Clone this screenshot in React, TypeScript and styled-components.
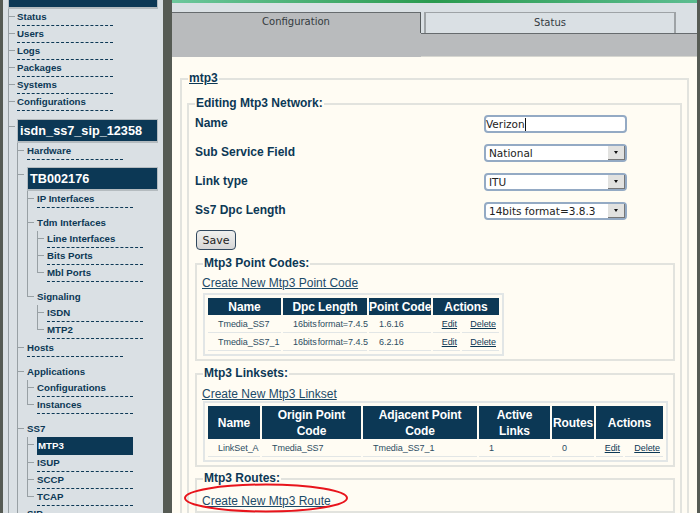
import React from "react";
import styled, { createGlobalStyle } from "styled-components";

const Global = createGlobalStyle`
  html, body { margin: 0; padding: 0; height: 513px; overflow: hidden; background: #565b54; }
  * { box-sizing: border-box; }
`;

const NAVY = "#0c3855";

const Shell = styled.div`
  display: flex;
  height: 513px;
  padding: 0 3px;
  overflow: hidden;
  font-family: "Liberation Sans", Arial, sans-serif;
  color: ${NAVY};
  position: relative;
`;

const Sidebar = styled.nav`
  flex: 0 0 160px;
  height: 513px;
  overflow: hidden;
  background: #dae0e4;
  padding: 0 5px 0 5px;
`;

const TopBlock = styled.div`
  height: 9px;
  background: ${NAVY};
  border-bottom: 2px solid #b4bbbf;
  border-left: 1px solid #b4bbbf;
  border-right: 1px solid #b4bbbf;
`;

const TreeNode = styled.div<{ $gap?: number; $last?: boolean; $indent?: number }>`
  position: relative;
  padding-top: ${(p) => p.$gap ?? 0}px;
  padding-left: ${(p) => p.$indent ?? 10}px;
  &::before {
    content: "";
    position: absolute;
    left: 0;
    top: 0;
    width: 1px;
    background: #98a0a4;
    ${(p) => (p.$last ? `height: ${(p.$gap ?? 0) + 8}px;` : "bottom: 0;")}
  }
  &::after {
    content: "";
    position: absolute;
    left: 0;
    top: ${(p) => (p.$gap ?? 0) + 7}px;
    width: 7px;
    height: 1px;
    background: #98a0a4;
  }
`;

const LinkRow = styled.div`
  width: 96px;
  height: 17px;
  font-size: 9.7px;
  font-weight: 700;
  line-height: 15px;
  border-bottom: 1px dashed ${NAVY};
  white-space: nowrap;
`;

const GroupRow = styled.div`
  height: 16px;
  font-size: 9.7px;
  font-weight: 700;
  line-height: 16px;
  white-space: nowrap;
`;

const BlockRow = styled.div<{ $h: number }>`
  height: ${(p) => p.$h}px;
  background: ${NAVY};
  color: #fff;
  border: 1px solid #b4bbbf;
  border-width: 1px 1px 2px 1px;
  font-size: 12.7px;
  font-weight: 700;
  line-height: ${(p) => p.$h - 2}px;
  padding-left: 2px;
  white-space: nowrap;
`;

const ActiveRow = styled.div`
  width: 96px;
  height: 18px;
  background: ${NAVY};
  color: #fff;
  font-size: 9.7px;
  font-weight: 700;
  line-height: 18px;
  padding-left: 1px;
`;

const Gutter = styled.div`
  flex: 0 0 9px;
`;

const Main = styled.main`
  flex: 1;
  min-width: 0;
  height: 513px;
  overflow: hidden;
  background: #fffcf3;
`;

const GreenBar = styled.div`
  height: 3px;
  background: linear-gradient(90deg, #6cc79c, #2a9a4e 50%, #5cbd90);
`;

const TabStrip = styled.div`
  display: flex;
  align-items: flex-end;
  height: 30px;
  padding-top: 9px;
  background: #dae0e4;
`;

const Tab = styled.div<{ $active?: boolean }>`
  font-family: "DejaVu Sans", sans-serif;
  font-size: 10px;
  text-align: center;
  height: 21px;
  color: #333a3e;
  ${(p) =>
    p.$active
      ? `flex: 0 0 249px; background:#b9bbbd; border-top:1px solid #666b6e; border-right:1px solid #555a5c; line-height:17px;`
      : `flex: 0 0 252px; margin-left:3px; background:#dae0e4; border:1px solid #9ea3a6; border-bottom:0; border-width:1px 2px 0 2px; line-height:19px;`}
`;

const GreyBand = styled.div`
  height: 24px;
  background: #b9bbbd;
  border-top: 1px solid #666b6e;
  border-bottom: 1px solid #d6d6d0;
  margin-left: 249px;
`;

const GreyFill = styled.div`
  background: #b9bbbd;
`;

const Content = styled.div`
  padding: 15px 8px 0;
`;

const Box = styled.fieldset<{ $pad: string; $mt?: number }>`
  margin: ${(p) => p.$mt ?? 0}px 0 0;
  padding: ${(p) => p.$pad};
  border: 2px solid #e2e3de;
  min-width: 0;
`;

const Legend = styled.legend<{ $link?: boolean }>`
  font-size: 12px;
  font-weight: 700;
  line-height: 13px;
  padding: 0 1px;
  margin-left: 1px;
  text-decoration: ${(p) => (p.$link ? "underline" : "none")};
  color: ${NAVY};
`;

const Stack = styled.div`
  padding-left: 1px;
`;

const FormGrid = styled.div`
  display: grid;
  grid-template-columns: 289px 143px;
  grid-auto-rows: 18px;
  row-gap: 11px;
  padding-top: 5px;
`;

const FieldLabel = styled.label`
  font-size: 12px;
  font-weight: 700;
  line-height: 16px;
`;

const Control = styled.div`
  position: relative;
  display: flex;
  align-items: center;
  height: 18px;
  border: 2px solid #94aac4;
  border-radius: 4px;
  background: #fff;
  font-family: "DejaVu Sans", sans-serif;
  font-size: 10.5px;
  color: #222;
`;

const TextValue = styled.span`
  border-right: 1px solid #111;
  line-height: 13px;
`;

const SelectValue = styled.span`
  flex: 1;
  padding-left: 3px;
  white-space: nowrap;
`;

const SelectButton = styled.span`
  width: 17px;
  height: 14px;
  background: #e2e2e0;
  border-right: 1px solid #777;
  border-bottom: 1px solid #777;
  display: flex;
  align-items: center;
  justify-content: center;
  &::after {
    content: "";
    border-left: 2px solid transparent;
    border-right: 2px solid transparent;
    border-top: 3px solid #111;
  }
`;

const SaveButton = styled.button`
  display: block;
  width: 40px;
  height: 20px;
  margin: 10px 0 0 1px;
  padding: 0;
  border: 1px solid #31485e;
  border-radius: 4px;
  background: linear-gradient(#f0f0ee, #d6d6d6);
  font-family: "DejaVu Sans", sans-serif;
  font-size: 11px;
  color: #222;
`;

const CreateLink = styled.a`
  display: block;
  font-size: 12px;
  line-height: 14px;
  color: #1c4a68;
  text-decoration: underline;
  white-space: nowrap;
`;

const DataTable = styled.table<{ $w: number; $mt: number }>`
  table-layout: fixed;
  width: ${(p) => p.$w}px;
  margin: ${(p) => p.$mt}px 0 0 1px;
  padding: 1px;
  border: 2px solid #e2e6e6;
  border-collapse: separate;
  border-spacing: 2px;
`;

const HeadCell = styled.th<{ $h: number }>`
  height: ${(p) => p.$h}px;
  padding: 0;
  background: ${NAVY};
  color: #fff;
  font-size: 12px;
  font-weight: 700;
  line-height: 16px;
  text-align: center;
  white-space: nowrap;
  letter-spacing: -0.1px;
`;

const Cell = styled.td`
  height: 16px;
  padding: 0 0 2px 10px;
  border-bottom: 1px solid #e2e6e6;
  font-size: 9px;
  line-height: 12px;
  color: #2d4c62;
  white-space: nowrap;
  word-spacing: -1.5px;
  letter-spacing: -0.05px;
`;

const ActionCell = styled(Cell)`
  padding: 0 3px 2px 0;
  text-align: right;
`;

const ActionLink = styled.a`
  color: ${NAVY};
  text-decoration: underline;
`;

const Ring = styled.svg`
  position: absolute;
  left: 183px;
  top: 483px;
  pointer-events: none;
`;

type N = { label: string; kind?: "group" | "block" | "active"; h?: number; gap?: number; kids?: N[] };

const tree: N[] = [
  { label: "Status" },
  { label: "Users" },
  { label: "Logs" },
  { label: "Packages" },
  { label: "Systems" },
  { label: "Configurations" },
  {
    label: "isdn_ss7_sip_12358",
    kind: "block",
    h: 24,
    gap: 8,
    kids: [
      { label: "Hardware" },
      {
        label: "TB002176",
        kind: "block",
        h: 24,
        gap: 7,
        kids: [
          { label: "IP Interfaces", gap: 0 },
          {
            label: "Tdm Interfaces",
            kind: "group",
            gap: 7,
            kids: [{ label: "Line Interfaces" }, { label: "Bits Ports" }, { label: "Mbl Ports" }],
          },
          {
            label: "Signaling",
            kind: "group",
            gap: 7,
            kids: [{ label: "ISDN" }, { label: "MTP2" }],
          },
        ],
      },
      { label: "Hosts", gap: 1 },
      {
        label: "Applications",
        kind: "group",
        gap: 7,
        kids: [{ label: "Configurations" }, { label: "Instances" }],
      },
      {
        label: "SS7",
        kind: "group",
        gap: 7,
        kids: [
          { label: "MTP3", kind: "active" },
          { label: "ISUP" },
          { label: "SCCP" },
          { label: "TCAP" },
        ],
      },
      { label: "SIP", kind: "group", gap: 0 },
    ],
  },
];

function TreeView({ nodes, depth }: { nodes: N[]; depth: number }) {
  return (
    <>
      {nodes.map((n, i) => (
        <TreeNode
          key={n.label + i}
          $gap={n.gap}
          $indent={depth === 0 ? 9 : 10}
          $last={depth > 1 && i === nodes.length - 1}
        >
          {n.kind === "block" ? (
            <BlockRow $h={n.h ?? 24}>{n.label}</BlockRow>
          ) : n.kind === "active" ? (
            <ActiveRow>{n.label}</ActiveRow>
          ) : n.kind === "group" ? (
            <GroupRow>{n.label}</GroupRow>
          ) : (
            <LinkRow>{n.label}</LinkRow>
          )}
          {n.kids && <TreeView nodes={n.kids} depth={depth + 1} />}
        </TreeNode>
      ))}
    </>
  );
}

function Field({ label, children }: { label: string; children: React.ReactNode }) {
  return (
    <>
      <FieldLabel>{label}</FieldLabel>
      {children}
    </>
  );
}

function SelectBox({ value }: { value: string }) {
  return (
    <Control>
      <SelectValue>{value}</SelectValue>
      <SelectButton />
    </Control>
  );
}

function Actions() {
  return (
    <>
      <ActionCell>
        <ActionLink>Edit</ActionLink>
      </ActionCell>
      <ActionCell>
        <ActionLink>Delete</ActionLink>
      </ActionCell>
    </>
  );
}

const pointRows = [
  ["Tmedia_SS7", "16bits format=7.4.5", "1.6.16"],
  ["Tmedia_SS7_1", "16bits format=7.4.5", "6.2.16"],
];

export default function App() {
  return (
    <>
      <Global />
      <Shell>
        <Sidebar>
          <TopBlock />
          <TreeView nodes={tree} depth={0} />
        </Sidebar>
        <Gutter />
        <Main>
          <GreenBar />
          <TabStrip>
            <Tab $active>Configuration</Tab>
            <Tab>Status</Tab>
          </TabStrip>
          <GreyFill>
            <GreyBand />
          </GreyFill>
          <Content>
            <Box $pad="0 5px 0 5px">
              <Legend $link>mtp3</Legend>
              <Box $pad="0 5px 0 5px" $mt={12}>
                <Legend>Editing Mtp3 Network:</Legend>
                <Stack>
                  <FormGrid>
                    <Field label="Name">
                      <Control>
                        <TextValue>Verizon</TextValue>
                      </Control>
                    </Field>
                    <Field label="Sub Service Field">
                      <SelectBox value="National" />
                    </Field>
                    <Field label="Link type">
                      <SelectBox value="ITU" />
                    </Field>
                    <Field label="Ss7 Dpc Length">
                      <SelectBox value="14bits format=3.8.3" />
                    </Field>
                  </FormGrid>
                  <SaveButton>Save</SaveButton>

                  <Box $pad="6px 4px 3px 5px" $mt={7}>
                    <Legend>Mtp3 Point Codes:</Legend>
                    <CreateLink>Create New Mtp3 Point Code</CreateLink>
                    <DataTable $w={300} $mt={3}>
                      <colgroup>
                        <col style={{ width: 73 }} />
                        <col style={{ width: 84 }} />
                        <col style={{ width: 62 }} />
                        <col style={{ width: 27 }} />
                        <col style={{ width: 37 }} />
                      </colgroup>
                      <thead>
                        <tr>
                          <HeadCell $h={17}>Name</HeadCell>
                          <HeadCell $h={17}>Dpc Length</HeadCell>
                          <HeadCell $h={17}>Point Code</HeadCell>
                          <HeadCell $h={17} colSpan={2}>Actions</HeadCell>
                        </tr>
                      </thead>
                      <tbody>
                        {pointRows.map((r) => (
                          <tr key={r[0]}>
                            {r.map((c) => (
                              <Cell key={c}>{c}</Cell>
                            ))}
                            <Actions />
                          </tr>
                        ))}
                      </tbody>
                    </DataTable>
                  </Box>

                  <Box $pad="7px 4px 3px 5px" $mt={6}>
                    <Legend>Mtp3 Linksets:</Legend>
                    <CreateLink>Create New Mtp3 Linkset</CreateLink>
                    <DataTable $w={463} $mt={0}>
                      <colgroup>
                        <col style={{ width: 52 }} />
                        <col style={{ width: 99 }} />
                        <col style={{ width: 114 }} />
                        <col style={{ width: 71 }} />
                        <col style={{ width: 42 }} />
                        <col style={{ width: 27 }} />
                        <col style={{ width: 38 }} />
                      </colgroup>
                      <thead>
                        <tr>
                          <HeadCell $h={33}>Name</HeadCell>
                          <HeadCell $h={33}>Origin Point<br />Code</HeadCell>
                          <HeadCell $h={33}>Adjacent Point<br />Code</HeadCell>
                          <HeadCell $h={33}>Active<br />Links</HeadCell>
                          <HeadCell $h={33}>Routes</HeadCell>
                          <HeadCell $h={33} colSpan={2}>Actions</HeadCell>
                        </tr>
                      </thead>
                      <tbody>
                        <tr>
                          <Cell>LinkSet_A</Cell>
                          <Cell>Tmedia_SS7</Cell>
                          <Cell>Tmedia_SS7_1</Cell>
                          <Cell>1</Cell>
                          <Cell>0</Cell>
                          <Actions />
                        </tr>
                      </tbody>
                    </DataTable>
                  </Box>

                  <Box $pad="9px 4px 3px 5px" $mt={5}>
                    <Legend>Mtp3 Routes:</Legend>
                    <CreateLink>Create New Mtp3 Route</CreateLink>
                  </Box>
                </Stack>
              </Box>
            </Box>
          </Content>
        </Main>
        <Ring width="166" height="30" viewBox="0 0 166 30">
          <ellipse cx="83" cy="15" rx="81" ry="13.5" fill="none" stroke="#e8141c" strokeWidth="2" />
        </Ring>
      </Shell>
    </>
  );
}
